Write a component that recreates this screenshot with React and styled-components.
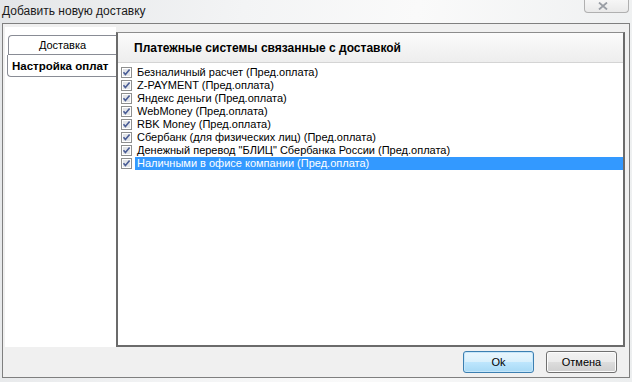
import React from 'react';
import styled, {createGlobalStyle} from 'styled-components';

const GlobalStyle = createGlobalStyle`
  html, body {
    margin: 0;
    padding: 0;
  }
  body {
    width: 632px;
    height: 382px;
    overflow: hidden;
    font-family: 'Liberation Sans', Arial, sans-serif;
    font-size: 11px;
    color: #000;
  }
`;

const Window = styled.div`
  width: 632px;
  height: 382px;
  display: flex;
  flex-direction: column;
  background: linear-gradient(100deg, #e4e6e8 0%, #f3f4f5 35%, #fafafa 60%, #eceeef 100%);
`;

const TitleBar = styled.div`
  height: 23px;
  display: flex;
  align-items: flex-start;
`;

const Title = styled.span`
  padding: 4px 0 0 2px;
  font-size: 12px;
  color: #1a1a1a;
`;

const CloseButton = styled.div`
  margin-left: auto;
  margin-right: 3px;
  width: 45px;
  height: 13px;
  border: 1px solid #b0b0b0;
  border-top: none;
  border-radius: 0 0 4px 4px;
  background: linear-gradient(#f6f6f6, #e9e9e9);
  display: flex;
  align-items: center;
  justify-content: center;
  padding-right: 8px;
  box-sizing: border-box;
`;

const Client = styled.div`
  margin: 0 2px;
  height: 355px;
  box-sizing: border-box;
  border: 1px solid #7f7f7f;
  background: #f0f0f0;
  display: flex;
  flex-direction: column;
  padding: 3px 2px 0 2px;
`;

const Body = styled.div`
  height: 320px;
  display: flex;
`;

const Sidebar = styled.div`
  width: 111px;
  background: #fff;
  padding-top: 8px;
  display: flex;
  flex-direction: column;
  align-items: flex-end;
`;

const Tab = styled.div`
  box-sizing: border-box;
  width: ${p => (p.$active ? 109 : 108)}px;
  height: ${p => (p.$active ? 22 : 20)}px;
  border: 1px solid #898c95;
  border-right: none;
  border-top: ${p => (p.$active ? 'none' : '1px solid #898c95')};
  border-radius: ${p => (p.$active ? '0 0 0 4px' : '4px 0 0 0')};
  background: #fff;
  display: flex;
  align-items: center;
  justify-content: ${p => (p.$active ? 'flex-start' : 'center')};
  padding-left: ${p => (p.$active ? 4 : 0)}px;
  font-weight: ${p => (p.$active ? 'bold' : 'normal')};
  font-size: ${p => (p.$active ? '11.5px' : '11px')};
  white-space: nowrap;
`;

const Panel = styled.div`
  flex: 1;
  margin: 5px 2px 0 0;
  display: flex;
  flex-direction: column;
  border: 2px solid #6b6b6b;
  border-top: 1px solid #8c8c8c;
  background: linear-gradient(#fbfbfb, #ededed 30px, #fff 30px);
`;

const PanelHeader = styled.div`
  height: 29px;
  display: flex;
  align-items: center;
  padding-left: 16px;
  font-weight: bold;
  font-size: 12px;
  border-bottom: 1px solid #d4d4d4;
`;

const List = styled.div`
  flex: 1;
  background: #fff;
  padding-top: 3px;
`;

const Row = styled.div`
  height: 13px;
  display: flex;
  align-items: center;
  padding-left: 3px;
`;

const Label = styled.span`
  flex: ${p => (p.$selected ? 1 : 'none')};
  margin-left: 3px;
  padding: 0 2px;
  line-height: 13px;
  white-space: nowrap;
  background: ${p => (p.$selected ? '#3399ff' : 'transparent')};
  color: ${p => (p.$selected ? '#fff' : '#000')};
`;

const Footer = styled.div`
  flex: 1;
  display: flex;
  justify-content: flex-end;
  align-items: flex-start;
  gap: 12px;
  padding: 4px 10px 0 0;
`;

const Button = styled.button`
  width: 71px;
  height: 22px;
  border-radius: 3px;
  font-family: inherit;
  font-size: 11px;
  color: #000;
  padding: 0;
  border: 1px solid ${p => (p.$default ? '#3c7fb1' : '#707070')};
  background: ${p =>
    p.$default
      ? 'linear-gradient(#eaf6fd 0%, #d9f0fc 50%, #bee6fd 50%, #a7d9f5 100%)'
      : 'linear-gradient(#f2f2f2 0%, #ebebeb 50%, #dddddd 50%, #cfcfcf 100%)'};
  box-shadow: inset 0 0 0 1px ${p => (p.$default ? '#c6e6f9' : '#fcfcfc')};
`;

const CheckBox = () => (
  <svg width="11" height="11" viewBox="0 0 11 11">
    <rect x="0.5" y="0.5" width="10" height="10" fill="#fff" stroke="#8e8f8f" />
    <rect x="2" y="2" width="7" height="7" fill="#e3e5e8" />
    <path d="M2.5 5.3 L4.4 7.6 L8.6 2.4" fill="none" stroke="#4a5d96" strokeWidth="1.6" />
  </svg>
);

const items = [
  'Безналичный расчет (Пред.оплата)',
  'Z-PAYMENT (Пред.оплата)',
  'Яндекс деньги (Пред.оплата)',
  'WebMoney (Пред.оплата)',
  'RBK Money (Пред.оплата)',
  'Сбербанк (для физических лиц) (Пред.оплата)',
  'Денежный перевод "БЛИЦ" Сбербанка России (Пред.оплата)',
  'Наличными в офисе компании (Пред.оплата)',
];

const App = () => {
  return (
    <Window>
      <GlobalStyle />
      <TitleBar>
        <Title>Добавить новую доставку</Title>
        <CloseButton>
          <svg width="10" height="8" viewBox="0 0 10 8">
            <path d="M1 0.5 L9 7.5 M9 0.5 L1 7.5" stroke="#9a9ea5" strokeWidth="1.8" />
          </svg>
        </CloseButton>
      </TitleBar>
      <Client>
        <Body>
          <Sidebar>
            <Tab>Доставка</Tab>
            <Tab $active>Настройка оплат</Tab>
          </Sidebar>
          <Panel>
            <PanelHeader>Платежные системы связанные с доставкой</PanelHeader>
            <List>
              {items.map((text, i) => (
                <Row key={i}>
                  <CheckBox />
                  <Label $selected={i === items.length - 1}>{text}</Label>
                </Row>
              ))}
            </List>
          </Panel>
        </Body>
        <Footer>
          <Button $default>Ok</Button>
          <Button>Отмена</Button>
        </Footer>
      </Client>
    </Window>
  );
};

export default App;
